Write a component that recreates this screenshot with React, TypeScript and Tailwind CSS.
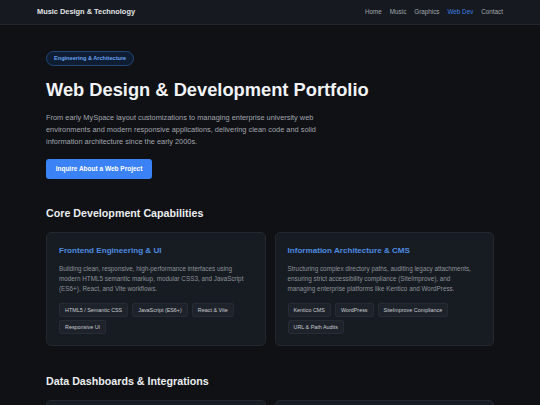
import React from 'react';

type Capability = {
  title: string;
  text: string;
  tags: string[];
};

const core: Capability[] = [
  {
    title: 'Frontend Engineering & UI',
    text: 'Building clean, responsive, high-performance interfaces using modern HTML5 semantic markup, modular CSS3, and JavaScript (ES6+), React, and Vite workflows.',
    tags: ['HTML5 / Semantic CSS', 'JavaScript (ES6+)', 'React & Vite', 'Responsive UI'],
  },
  {
    title: 'Information Architecture & CMS',
    text: 'Structuring complex directory paths, auditing legacy attachments, ensuring strict accessibility compliance (SiteImprove), and managing enterprise platforms like Kentico and WordPress.',
    tags: ['Kentico CMS', 'WordPress', 'SiteImprove Compliance', 'URL & Path Audits'],
  },
];

const data: Capability[] = [
  {
    title: 'Dashboards & Reporting',
    text: 'Designing data dashboards and reporting views that turn raw records into clear, actionable information.',
    tags: ['Charts', 'APIs'],
  },
  {
    title: 'Integrations',
    text: 'Connecting platforms, services and data sources with reliable, maintainable integration code.',
    tags: ['REST', 'Webhooks'],
  },
];

const nav = ['Home', 'Music', 'Graphics', 'Web Dev', 'Contact'];

function Card({ item }: { item: Capability }) {
  return (
    <div className="bg-[#171b22] border border-[#232730] rounded-[5px] px-[12px] pt-[12px] pb-[11px]">
      <h3 className="text-[8.1px] leading-[11px] font-bold text-[#4d8ce0]">{item.title}</h3>
      <p className="mt-[8px] pr-[4px] text-[6.35px] leading-[10px] text-[#8c9199]">{item.text}</p>
      <div className="mt-[9px] flex flex-wrap gap-x-[4px] gap-y-[3px]">
        {item.tags.map((t) => (
          <span
            key={t}
            className="h-[14px] px-[5px] flex items-center text-[5.4px] text-[#c9ccd2] bg-[#1e222a] border border-[#272b34] rounded-[2px]"
          >
            {t}
          </span>
        ))}
      </div>
    </div>
  );
}

export default function App() {
  return (
    <div
      className="h-[405px] overflow-hidden bg-[#0f1115] text-[#e6e7e9]"
      style={{ fontFamily: '"Liberation Sans", Arial, sans-serif' }}
    >
      <header className="h-[25px] bg-[#161a20] border-b border-[#22262e] flex items-center justify-between px-[37px]">
        <span className="text-[7.4px] font-bold text-[#e3e4e6]">Music Design &amp; Technology</span>
        <nav className="flex gap-[8px] text-[6.3px]">
          {nav.map((n) => (
            <span key={n} className={n === 'Web Dev' ? 'text-[#3f7ee0]' : 'text-[#a3a7ae]'}>
              {n}
            </span>
          ))}
        </nav>
      </header>

      <main className="px-[46px] pt-[26px]">
        <div className="flex">
          <span className="flex items-center h-[15px] px-[7px] rounded-full bg-[#0f1d33] border border-[#234577] text-[5.6px] font-bold text-[#69a1ee]">
            Engineering &amp; Architecture
          </span>
        </div>

        <h1 className="mt-[13px] text-[18.3px] leading-[22px] font-bold text-[#f2f3f5]">
          Web Design &amp; Development Portfolio
        </h1>

        <p className="mt-[11px] max-w-[300px] text-[7.4px] leading-[12px] text-[#a2a6ad]">
          From early MySpace layout customizations to managing enterprise university web environments and modern responsive applications, delivering clean code and solid information architecture since the early 2000s.
        </p>

        <button className="mt-[11px] h-[20px] w-[106px] rounded-[3px] bg-[#3b82f6] text-[6.5px] font-bold text-white">
          Inquire About a Web Project
        </button>

        <h2 className="mt-[27px] text-[10.7px] leading-[14px] font-bold text-[#eceef0]">
          Core Development Capabilities
        </h2>

        <div className="mt-[12px] grid grid-cols-2 gap-[9px]">
          {core.map((c) => (
            <Card key={c.title} item={c} />
          ))}
        </div>

        <h2 className="mt-[28px] text-[10.7px] leading-[14px] font-bold text-[#eceef0]">
          Data Dashboards &amp; Integrations
        </h2>

        <div className="mt-[12px] grid grid-cols-2 gap-[9px]">
          {data.map((c) => (
            <Card key={c.title} item={c} />
          ))}
        </div>
      </main>
    </div>
  );
}
